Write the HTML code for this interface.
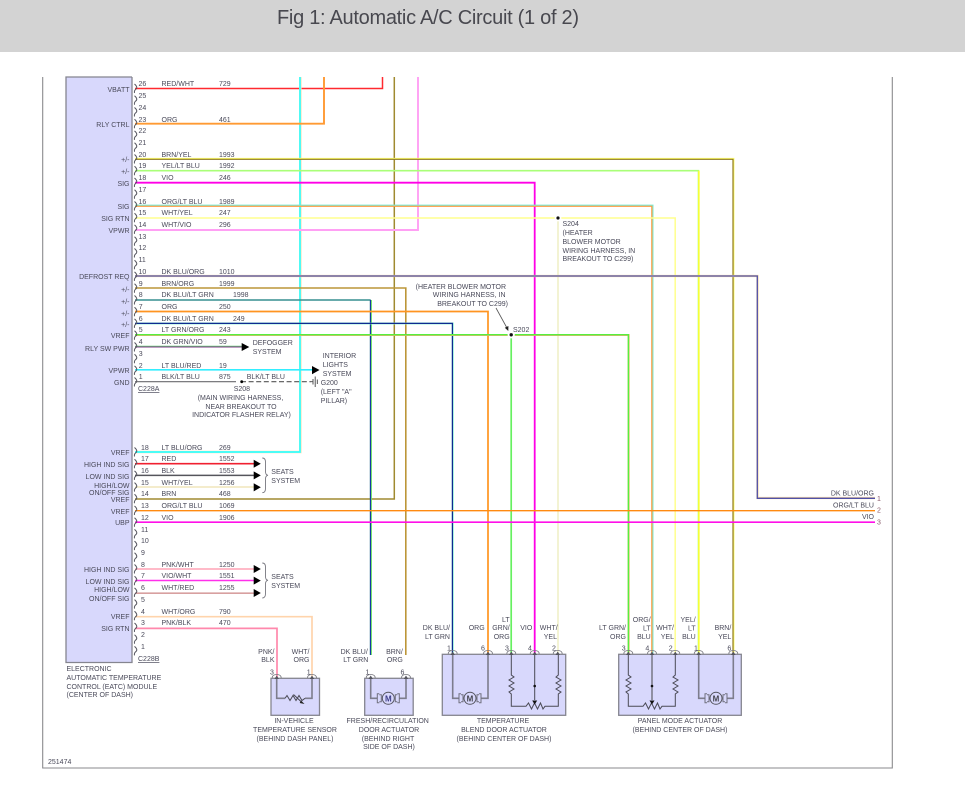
<!DOCTYPE html>
<html lang="en"><head><meta charset="utf-8"><title>Fig 1: Automatic A/C Circuit (1 of 2)</title>
<style>
html,body{margin:0;padding:0;background:#fff;width:965px;height:787px;overflow:hidden}
svg{display:block;filter:blur(.25px)}
text{font-family:"Liberation Sans",sans-serif;font-size:7px;fill:#4a4a5a}
.e{text-anchor:end}.m{text-anchor:middle}
.title{font-size:20px;fill:#48484f}
.w{fill:none}
</style></head><body>
<svg width="965" height="787" viewBox="0 0 965 787" xmlns="http://www.w3.org/2000/svg">
<defs><path id="c" d="M0-4.5Q4-1 1 1Q-.5 2.5 0 4.5" fill="none" stroke="#55555f" stroke-width="1"/>
<g id="pin"><path d="M-4.5 0Q-4.5-3.5 0-3.5Q4.5-3.5 4.5 0" fill="none" stroke="#77777f" stroke-width=".8"/><path d="M0-2.5L-2.3 1H2.3Z" fill="#55555f"/></g>
<g id="motor" fill="none" stroke="#70707e" stroke-width="1"><path d="M-9-3.5H-7V3.5H-9M-9-4.5H-11V4.5H-9M9-3.5H7V3.5H9M9-4.5H11V4.5H9" /><circle r="6" fill="#d8d8fc" stroke="#55555f"/></g>
</defs>
<rect width="965" height="52" fill="#d3d3d3"/>
<text class="title" x="277" y="24" textLength="302">Fig 1: Automatic A/C Circuit (1 of 2)</text>
<path d="M42.7 77V768H892.3V77" fill="none" stroke="#8a8a8e" stroke-width="1.1"/>

<!-- boxes -->
<g fill="#d8d8fc" stroke="#85858f" stroke-width="1.3">
<path d="M132 77H66V662.5H132V77"/>
<rect x="271" y="678.3" width="48.5" height="37"/>
<rect x="364.7" y="678.3" width="48.5" height="37"/>
<rect x="442.3" y="654.3" width="123.4" height="61"/>
<rect x="618.7" y="654.3" width="122.6" height="61"/>
</g>

<!-- wires -->
<g class="w">
<path d="M135 88.5H382.5V77" stroke="#ff2a30" stroke-width="1.5"/>
<path d="M135 452H300.3V77" stroke="#fbe0b8" stroke-width="2.6"/>
<path d="M135 452H300V77" stroke="#33ffff" stroke-width="1.7"/>
<path d="M135 123.7H324V77" stroke="#ff9a33" stroke-width="1.9"/>
<path d="M135 499H394.3V77" stroke="#a08a30" stroke-width="1.5"/>
<path d="M135 230H418V77" stroke="#ffa0f4" stroke-width="1.9"/>

<path d="M135 158.6H733.7V655" stroke="#ffff70" stroke-width="1.5"/>
<path d="M135 159.3H733V655" stroke="#8f7a20" stroke-width="1.2"/>
<path d="M135 170.7H698.5V655" stroke="#aaff78" stroke-width="1.6"/>
<path d="M698.9 170.7V655" stroke="#ffff30" stroke-width="1.5"/>
<path d="M135 182.7H534.7V655" stroke="#ff00e6" stroke-width="1.8"/>
<path d="M135 205.5H652.6V655" stroke="#7fe8d0" stroke-width="1.8"/>
<path d="M135 206.3H651.8V655" stroke="#ff9a40" stroke-width="1.2"/>
<path d="M135 218H675.2V655" stroke="#ffff8e" stroke-width="1.5"/>
<path d="M558 218V655" stroke="#f0f0c8" stroke-width="1.6"/>
<path d="M135 276H757.5V498H875" stroke="#f3d8a8" stroke-width="2.2"/>
<path d="M135 276H757.3V498.3H875" stroke="#5050a8" stroke-width="1.3"/>
<path d="M135 288H405.8V655" stroke="#bc9638" stroke-width="1.6"/>
<path d="M135 300H370.7" stroke="#378f90" stroke-width="1.5"/>
<path d="M370.9 300V655" stroke="#66e060" stroke-width="2"/>
<path d="M370.4 300V655" stroke="#1030a8" stroke-width="1.1"/>
<path d="M135 311.5H488V655" stroke="#ff9420" stroke-width="1.7"/>
<path d="M135 323.4H452.7V655" stroke="#80f0d0" stroke-width="1.9"/>
<path d="M135 323.4H452.4V655" stroke="#102a90" stroke-width="1.2"/>
<path d="M135 335H628.6V655" stroke="#f0b070" stroke-width="2"/>
<path d="M135 334.7H628.4V655" stroke="#55f040" stroke-width="1.4"/>
<path d="M511.2 335V655" stroke="#66f060" stroke-width="1.7"/>
<path d="M135 346.2H243" stroke="#60d070" stroke-width="1"/>
<path d="M135 347H243" stroke="#803c88" stroke-width="1"/>
<path d="M135 369.8H313" stroke="#33eeff" stroke-width="1.7"/>
<path d="M135 381.7H236" stroke="#6a6a6e" stroke-width="1.2"/>
<path d="M241 381.7H311" stroke="#555" stroke-width="1.2" stroke-dasharray="5 2.6"/>
<path d="M135 463.7H254" stroke="#f02030" stroke-width="1.6"/>
<path d="M135 475.4H254" stroke="#55555c" stroke-width="1.5"/>
<path d="M135 487H254" stroke="#f2eac4" stroke-width="1.7"/>
<path d="M135 510.7H875" stroke="#ff8a10" stroke-width="1.3"/>
<path d="M135 522.2H875" stroke="#ff10e8" stroke-width="1.7"/>
<path d="M135 569H254" stroke="#ffb0c0" stroke-width="1.8"/>
<path d="M135 580.5H254" stroke="#ff30ea" stroke-width="1.5"/>
<path d="M135 593.2H254" stroke="#d8a0a0" stroke-width="1.6"/>
<path d="M135 616.7H312V678" stroke="#ffd4ac" stroke-width="1.7"/>
<path d="M135 628.4H277V678" stroke="#ff88ac" stroke-width="1.7"/>
</g>

<!-- connector brackets -->
<g>
<use href="#c" x="134.5" y="88.5"/><use href="#c" x="134.5" y="100.2"/><use href="#c" x="134.5" y="112"/><use href="#c" x="134.5" y="123.7"/><use href="#c" x="134.5" y="135.4"/><use href="#c" x="134.5" y="147.2"/><use href="#c" x="134.5" y="159"/><use href="#c" x="134.5" y="170.7"/><use href="#c" x="134.5" y="182.5"/><use href="#c" x="134.5" y="194.2"/><use href="#c" x="134.5" y="206"/><use href="#c" x="134.5" y="217.7"/><use href="#c" x="134.5" y="229.4"/><use href="#c" x="134.5" y="241.2"/><use href="#c" x="134.5" y="253"/><use href="#c" x="134.5" y="264.7"/><use href="#c" x="134.5" y="276.4"/><use href="#c" x="134.5" y="288.2"/><use href="#c" x="134.5" y="300"/><use href="#c" x="134.5" y="311.7"/><use href="#c" x="134.5" y="323.4"/><use href="#c" x="134.5" y="335.2"/><use href="#c" x="134.5" y="347"/><use href="#c" x="134.5" y="358.7"/><use href="#c" x="134.5" y="370.4"/><use href="#c" x="134.5" y="382"/>
<use href="#c" x="134.5" y="452"/><use href="#c" x="134.5" y="463.7"/><use href="#c" x="134.5" y="475.4"/><use href="#c" x="134.5" y="487.1"/><use href="#c" x="134.5" y="498.8"/><use href="#c" x="134.5" y="510.5"/><use href="#c" x="134.5" y="522.2"/><use href="#c" x="134.5" y="533.9"/><use href="#c" x="134.5" y="545.6"/><use href="#c" x="134.5" y="557.3"/><use href="#c" x="134.5" y="569"/><use href="#c" x="134.5" y="580.7"/><use href="#c" x="134.5" y="592.4"/><use href="#c" x="134.5" y="604.1"/><use href="#c" x="134.5" y="615.8"/><use href="#c" x="134.5" y="627.5"/><use href="#c" x="134.5" y="639.2"/><use href="#c" x="134.5" y="650.9"/>
</g>

<!-- arrows, splices, symbols -->
<g fill="#000">
<path d="M241.7 343V351L249.3 347Z"/><path d="M312 366V374.2L319.5 370Z"/>
<path d="M253.7 459.7V467.7L260.8 463.7Z"/><path d="M253.7 471.4V479.4L260.8 475.4Z"/><path d="M253.7 483.2V491.4L260.8 487.3Z"/>
<path d="M253.7 565V573L260.8 569Z"/><path d="M253.7 576.6V584.6L260.8 580.6Z"/><path d="M253.7 589V597L260.8 593Z"/>
<circle cx="241.7" cy="381.7" r="1.4"/>
</g>
<circle cx="558" cy="218" r="3.4" fill="#fff"/><circle cx="558" cy="218" r="1.6" fill="#111"/>
<circle cx="511.2" cy="334.8" r="3.6" fill="#fff"/><circle cx="511.2" cy="334.8" r="1.7" fill="#111"/>
<path d="M496 308L507 328" stroke="#555" stroke-width=".8"/><path d="M508.3 331L504.8 327.8L508.4 326Z" fill="#222"/>
<path d="M311 381.7H312.5M313 379V384.5M315.2 376.5V387M317.3 379.5V384" stroke="#444" stroke-width=".9" fill="none"/>
<g fill="none" stroke="#77777f" stroke-width=".9">
<path d="M262.3 458Q265.5 458 265.5 462V471.5Q265.5 475 268 475.3Q265.5 475.6 265.5 479V488.5Q265.5 492.7 262.3 492.7"/>
<path d="M262.3 563Q265.5 563 265.5 567V576.5Q265.5 580 268 580.3Q265.5 580.6 265.5 584V593.5Q265.5 598 262.3 598"/>
</g>

<!-- component interior -->
<g fill="none" stroke="#7d7d8c" stroke-width="1.6">
<path d="M276.7 678V698.3H285M305 698.3H312V678"/>
<path d="M370.7 678V698.3H377M399 698.3H406V678"/>
<path d="M452.7 654V698.3H459M481 698.3H488V654"/>
<path d="M698.7 654V698.3H705M727 698.3H733.3V654"/>
<path d="M652 654V700"/>
</g>
<g fill="none" stroke="#4a4a55" stroke-width="1">
<path d="M285 698.3L287 695.5L290 700.5L293 695.5L296 700.5L299 695.5L302 700.5L305 698.3"/>
<path d="M293.5 694.5L302 702.5"/>
<path d="M511.3 654V675L514 677L509 680L514 683L509 686L514 689L509 692L511.3 694V706.3H526L528.5 703L531.5 709L534.5 703L537.5 709L540.5 703L543 709L545 706.3H558.3V694L561 692L556 689L561 686L556 683L561 680L556 677L558.3 675V654"/>
<path d="M534.7 654V700"/>
<path d="M628.3 654V675L631 677L626 680L631 683L626 686L631 689L626 692L628.3 694V706.3H643L645.5 703L648.5 709L651.5 703L654.5 709L657.5 703L660 709L662 706.3H675.3V694L678 692L673 689L678 686L673 683L678 680L673 677L675.3 675V654"/>
</g>
<path d="M301 700.5L304.5 704L299.7 703Z" fill="#222"/>
<g fill="#111"><circle cx="534.7" cy="686" r="1.3"/><circle cx="652" cy="686" r="1.3"/><path d="M532.2 700.5H537.2L534.7 704.5Z"/><path d="M649.5 700.5H654.5L652 704.5Z"/></g>
<use href="#motor" x="388.3" y="698.3"/><use href="#motor" x="470" y="698.3"/><use href="#motor" x="716" y="698.3"/>
<text class="m" x="388.3" y="701.3" font-weight="bold" style="font-size:8px;fill:#3c3c88">M</text><text class="m" x="470" y="701.3" font-weight="bold" style="font-size:8px;fill:#44444c">M</text><text class="m" x="716" y="701.3" font-weight="bold" style="font-size:8px;fill:#44444c">M</text>
<g>
<use href="#pin" x="276.7" y="678"/><use href="#pin" x="312" y="678"/><use href="#pin" x="370.7" y="678"/><use href="#pin" x="406" y="678"/>
<use href="#pin" x="452.7" y="654"/><use href="#pin" x="488" y="654"/><use href="#pin" x="511.3" y="654"/><use href="#pin" x="534.7" y="654"/><use href="#pin" x="557.7" y="654"/>
<use href="#pin" x="628.3" y="654"/><use href="#pin" x="652" y="654"/><use href="#pin" x="675.3" y="654"/><use href="#pin" x="698.7" y="654"/><use href="#pin" x="733.3" y="654"/>
</g>

<!-- module pin labels -->
<g>
<text class="e" x="129.5" y="92">VBATT</text><text class="e" x="129.5" y="127">RLY CTRL</text><text class="e" x="129.5" y="162">+/-</text><text class="e" x="129.5" y="174">+/-</text><text class="e" x="129.5" y="186">SIG</text><text class="e" x="129.5" y="209">SIG</text><text class="e" x="129.5" y="221">SIG RTN</text><text class="e" x="129.5" y="233">VPWR</text>
<text class="e" x="129.5" y="279">DEFROST REQ</text><text class="e" x="129.5" y="292">+/-</text><text class="e" x="129.5" y="304">+/-</text><text class="e" x="129.5" y="316">+/-</text><text class="e" x="129.5" y="327">+/-</text><text class="e" x="129.5" y="338">VREF</text><text class="e" x="129.5" y="351">RLY SW PWR</text><text class="e" x="129.5" y="373">VPWR</text><text class="e" x="129.5" y="385">GND</text>
<text class="e" x="129.5" y="455">VREF</text><text class="e" x="129.5" y="467">HIGH IND SIG</text><text class="e" x="129.5" y="479">LOW IND SIG</text><text class="e" x="129.5" y="488">HIGH/LOW</text><text class="e" x="129.5" y="495">ON/OFF SIG</text><text class="e" x="129.5" y="502">VREF</text><text class="e" x="129.5" y="514">VREF</text><text class="e" x="129.5" y="525">UBP</text>
<text class="e" x="129.5" y="572">HIGH IND SIG</text><text class="e" x="129.5" y="584">LOW IND SIG</text><text class="e" x="129.5" y="592">HIGH/LOW</text><text class="e" x="129.5" y="601">ON/OFF SIG</text><text class="e" x="129.5" y="619">VREF</text><text class="e" x="129.5" y="631">SIG RTN</text>
</g>

<!-- pin numbers -->
<g>
<text x="138.5" y="86">26</text><text x="138.5" y="98">25</text><text x="138.5" y="110">24</text><text x="138.5" y="122">23</text><text x="138.5" y="133">22</text><text x="138.5" y="145">21</text><text x="138.5" y="157">20</text><text x="138.5" y="168">19</text><text x="138.5" y="180">18</text><text x="138.5" y="192">17</text><text x="138.5" y="204">16</text><text x="138.5" y="215">15</text><text x="138.5" y="227">14</text><text x="138.5" y="239">13</text><text x="138.5" y="250">12</text><text x="138.5" y="262">11</text><text x="138.5" y="274">10</text><text x="138.7" y="286">9</text><text x="138.7" y="297">8</text><text x="138.7" y="309">7</text><text x="138.7" y="321">6</text><text x="138.7" y="332">5</text><text x="138.7" y="344">4</text><text x="138.7" y="356">3</text><text x="138.7" y="368">2</text><text x="138.7" y="379">1</text>
<text x="138" y="391" text-decoration="underline">C228A</text>
<text x="141" y="450">18</text><text x="141" y="461">17</text><text x="141" y="473">16</text><text x="141" y="485">15</text><text x="141" y="496">14</text><text x="141" y="508">13</text><text x="141" y="520">12</text><text x="141" y="532">11</text><text x="141" y="543">10</text><text x="141" y="555">9</text><text x="141" y="567">8</text><text x="141" y="578">7</text><text x="141" y="590">6</text><text x="141" y="602">5</text><text x="141" y="614">4</text><text x="141" y="625">3</text><text x="141" y="637">2</text><text x="141" y="649">1</text>
<text x="138" y="661" text-decoration="underline">C228B</text>
</g>

<!-- wire names & circuit numbers -->
<g>
<text x="161.5" y="86">RED/WHT</text><text x="219" y="86">729</text>
<text x="161.5" y="122">ORG</text><text x="219" y="122">461</text>
<text x="161.5" y="157">BRN/YEL</text><text x="219" y="157">1993</text>
<text x="161.5" y="168">YEL/LT BLU</text><text x="219" y="168">1992</text>
<text x="161.5" y="180">VIO</text><text x="219" y="180">246</text>
<text x="161.5" y="204">ORG/LT BLU</text><text x="219" y="204">1989</text>
<text x="161.5" y="215">WHT/YEL</text><text x="219" y="215">247</text>
<text x="161.5" y="227">WHT/VIO</text><text x="219" y="227">296</text>
<text x="161.5" y="274">DK BLU/ORG</text><text x="219" y="274">1010</text>
<text x="161.5" y="286">BRN/ORG</text><text x="219" y="286">1999</text>
<text x="161.5" y="297">DK BLU/LT GRN</text><text x="233" y="297">1998</text>
<text x="161.5" y="309">ORG</text><text x="219" y="309">250</text>
<text x="161.5" y="321">DK BLU/LT GRN</text><text x="233" y="321">249</text>
<text x="161.5" y="332">LT GRN/ORG</text><text x="219" y="332">243</text>
<text x="161.5" y="344">DK GRN/VIO</text><text x="219" y="344">59</text>
<text x="161.5" y="368">LT BLU/RED</text><text x="219" y="368">19</text>
<text x="161.5" y="379">BLK/LT BLU</text><text x="219" y="379">875</text>
<text x="161.5" y="450">LT BLU/ORG</text><text x="219" y="450">269</text>
<text x="161.5" y="461">RED</text><text x="219" y="461">1552</text>
<text x="161.5" y="473">BLK</text><text x="219" y="473">1553</text>
<text x="161.5" y="485">WHT/YEL</text><text x="219" y="485">1256</text>
<text x="161.5" y="496">BRN</text><text x="219" y="496">468</text>
<text x="161.5" y="508">ORG/LT BLU</text><text x="219" y="508">1069</text>
<text x="161.5" y="520">VIO</text><text x="219" y="520">1906</text>
<text x="161.5" y="567">PNK/WHT</text><text x="219" y="567">1250</text>
<text x="161.5" y="578">VIO/WHT</text><text x="219" y="578">1551</text>
<text x="161.5" y="590">WHT/RED</text><text x="219" y="590">1255</text>
<text x="161.5" y="614">WHT/ORG</text><text x="219" y="614">790</text>
<text x="161.5" y="625">PNK/BLK</text><text x="219" y="625">470</text>
</g>

<!-- notes -->
<g>
<text x="252.7" y="345">DEFOGGER</text><text x="252.7" y="354">SYSTEM</text>
<text x="322.7" y="358">INTERIOR</text><text x="322.7" y="367">LIGHTS</text><text x="322.7" y="376">SYSTEM</text>
<text x="320.7" y="385">G200</text><text x="320.7" y="394">(LEFT "A"</text><text x="320.7" y="403">PILLAR)</text>
<text x="246.7" y="379">BLK/LT BLU</text><text x="233.7" y="391">S208</text>
<text class="m" x="240.5" y="400">(MAIN WIRING HARNESS,</text><text class="m" x="241" y="409">NEAR BREAKOUT TO</text><text class="m" x="241.5" y="417">INDICATOR FLASHER RELAY)</text>
<text x="271.3" y="474">SEATS</text><text x="271.3" y="483">SYSTEM</text>
<text x="271.3" y="579">SEATS</text><text x="271.3" y="588">SYSTEM</text>
<text x="562.5" y="226">S204</text><text x="562.5" y="235">(HEATER</text><text x="562.5" y="244">BLOWER MOTOR</text><text x="562.5" y="253">WIRING HARNESS, IN</text><text x="562.5" y="261">BREAKOUT TO C299)</text>
<text class="e" x="506" y="289">(HEATER BLOWER MOTOR</text><text class="e" x="505.5" y="297">WIRING HARNESS, IN</text><text class="e" x="508" y="306">BREAKOUT TO C299)</text>
<text x="513" y="332">S202</text>
<text class="e" x="874" y="495.5">DK BLU/ORG</text><text class="e" x="874" y="507.5">ORG/LT BLU</text><text class="e" x="874" y="519">VIO</text>
<text x="877" y="501" style="fill:#8a5a6a">1</text><text x="877" y="512.5" style="fill:#8a5a6a">2</text><text x="877" y="524.5" style="fill:#8a5a6a">3</text>
<text x="66.5" y="671">ELECTRONIC</text><text x="66.5" y="680">AUTOMATIC TEMPERATURE</text><text x="66.5" y="689">CONTROL (EATC) MODULE</text><text x="66.5" y="697">(CENTER OF DASH)</text>
<text x="48" y="764">251474</text>
</g>

<!-- actuator wire labels -->
<g>
<text class="e" x="274.5" y="654">PNK/</text><text class="e" x="274.5" y="662">BLK</text><text class="e" x="309.5" y="654">WHT/</text><text class="e" x="309.5" y="662">ORG</text>
<text class="e" x="367.8" y="654">DK BLU/</text><text class="e" x="368.3" y="662">LT GRN</text><text class="e" x="402.8" y="654">BRN/</text><text class="e" x="402.8" y="662">ORG</text>
<text class="e" x="450" y="630">DK BLU/</text><text class="e" x="450" y="639">LT GRN</text>
<text class="e" x="484.7" y="630">ORG</text>
<text class="e" x="509.7" y="622">LT</text><text class="e" x="509.7" y="630">GRN/</text><text class="e" x="509.7" y="639">ORG</text>
<text class="e" x="532.3" y="630">VIO</text>
<text class="e" x="557.7" y="630">WHT/</text><text class="e" x="557" y="639">YEL</text>
<text class="e" x="626" y="630">LT GRN/</text><text class="e" x="626" y="639">ORG</text>
<text class="e" x="650.7" y="622">ORG/</text><text class="e" x="650.7" y="630.5">LT</text><text class="e" x="650.7" y="639">BLU</text>
<text class="e" x="674" y="630">WHT/</text><text class="e" x="674" y="639">YEL</text>
<text class="e" x="695.7" y="622">YEL/</text><text class="e" x="695.7" y="630.5">LT</text><text class="e" x="695.7" y="639">BLU</text>
<text class="e" x="731.3" y="630">BRN/</text><text class="e" x="731.3" y="639">YEL</text>
<text class="m" x="272" y="674.5">3</text><text class="m" x="308.7" y="674.5">1</text><text class="m" x="367.5" y="674.5">1</text><text class="m" x="402.5" y="674.5">6</text>
<text class="m" x="449" y="650.5">1</text><text class="m" x="483" y="650.5">6</text><text class="m" x="507" y="650.5">3</text><text class="m" x="530" y="650.5">4</text><text class="m" x="554" y="650.5">2</text>
<text class="m" x="623.7" y="650.5">3</text><text class="m" x="647.3" y="650.5">4</text><text class="m" x="670.7" y="650.5">2</text><text class="m" x="696" y="650.5">1</text><text class="m" x="729.3" y="650.5">6</text>
<text class="m" x="294" y="723">IN-VEHICLE</text><text class="m" x="295" y="732">TEMPERATURE SENSOR</text><text class="m" x="295" y="741">(BEHIND DASH PANEL)</text>
<text class="m" x="387.7" y="723">FRESH/RECIRCULATION</text><text class="m" x="389" y="732">DOOR ACTUATOR</text><text class="m" x="388" y="741">(BEHIND RIGHT</text><text class="m" x="389" y="749">SIDE OF DASH)</text>
<text class="m" x="503" y="723">TEMPERATURE</text><text class="m" x="504" y="732">BLEND DOOR ACTUATOR</text><text class="m" x="504" y="741">(BEHIND CENTER OF DASH)</text>
<text class="m" x="680" y="723">PANEL MODE ACTUATOR</text><text class="m" x="680" y="732">(BEHIND CENTER OF DASH)</text>
</g>
</svg>
</body></html>
